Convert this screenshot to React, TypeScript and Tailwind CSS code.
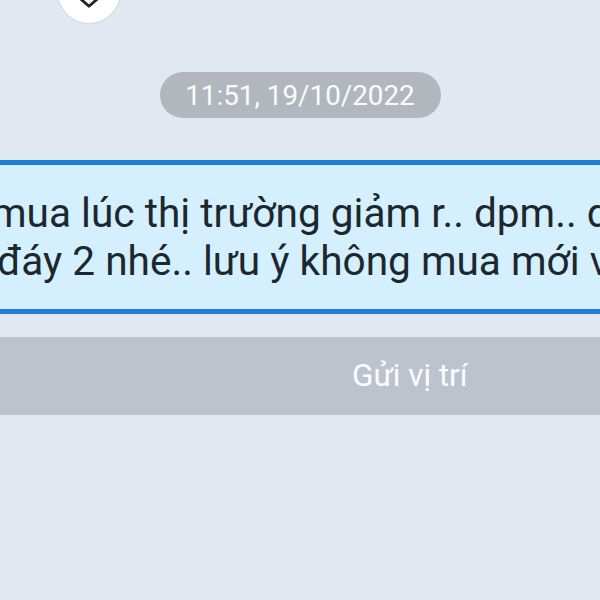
export default function App() {
  return (
    <main className="flex h-[600px] w-[600px] flex-col overflow-hidden bg-[#e1e8f2] font-['Roboto','Liberation_Sans',sans-serif]">
      <div className="flex h-[72px] shrink-0 items-start pl-[58px]">
        <div className="-mt-[39px] flex h-[62px] w-[62px] items-end justify-center rounded-full bg-white shadow-[0_0_2px_rgba(110,110,110,0.4)]">
          <svg width="30" height="26" viewBox="0 0 30 26" className="mb-[13px]" fill="none" stroke="#222" strokeWidth="2.8" strokeLinejoin="round">
            <path d="M15 22.2 5.5 14C-1 8 7-1 15 6c8-7 16 2 9.500 8Z" />
          </svg>
        </div>
      </div>
      <div className="flex h-[46px] shrink-0 justify-center">
        <time className="flex w-[281px] items-center justify-center rounded-full bg-[#b1b7bc] pt-[2px] text-[27.8px] whitespace-nowrap text-[#f8fcff]">11:51, 19/10/2022</time>
      </div>
      <div className="mt-[42px] h-[154px] shrink-0 overflow-hidden border-y-[5px] border-[#1e7ed8] bg-[#d4f0fe] pt-[24px] text-[40.6px] leading-[48px] whitespace-nowrap text-[#1d272e]">
        <p className="-ml-[9px]">mua lúc thị trường giảm r.. dpm.. d</p>
        <p className="-ml-[3px]">đáy 2 nhé.. lưu ý không mua mới v</p>
      </div>
      <div className="mt-[23px] flex h-[78px] shrink-0 items-center bg-[#bcc3cd] pl-[352px] text-[31.4px] text-[#fafcff]">Gửi vị trí</div>
    </main>
  );
}
